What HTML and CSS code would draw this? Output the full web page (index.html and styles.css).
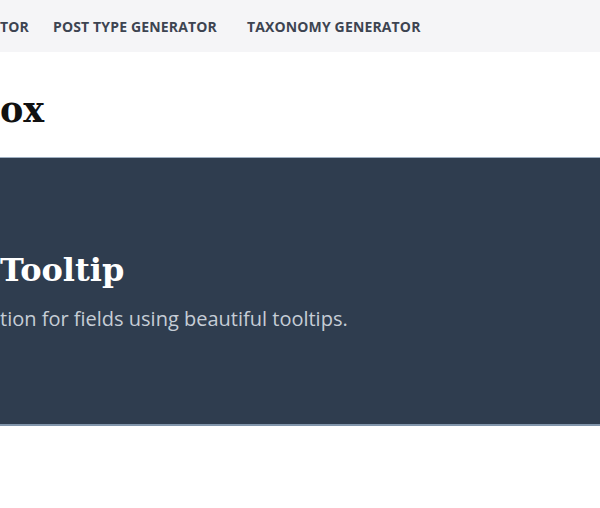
FILE: index.html
```html
<!DOCTYPE html>
<html lang="en">
<head>
<meta charset="utf-8">
<title>Meta Box Tooltip</title>
<link rel="stylesheet" href="styles.css">
</head>
<body>
<header class="nav">
  <a class="nav-link nav-link-first" href="#">TOR</a>
  <a class="nav-link" href="#">POST TYPE GENERATOR</a>
  <a class="nav-link" href="#">TAXONOMY GENERATOR</a>
</header>
<section class="brand">
  <h1 class="brand-title">ox</h1>
</section>
<section class="hero">
  <h2 class="hero-title">Tooltip</h2>
  <p class="hero-sub">tion for fields using beautiful tooltips.</p>
</section>
</body>
</html>
```
FILE: styles.css
```css
html, body {
  margin: 0;
  padding: 0;
  background: #ffffff;
}
body {
  width: 600px;
  overflow: hidden;
  font-family: "Open Sans", "DejaVu Sans", sans-serif;
}
.nav {
  height: 52px;
  background: #f5f5f7;
  display: flex;
  align-items: center;
  gap: 30px;
  padding-top: 1px;
  box-sizing: border-box;
}
.nav-link {
  font-size: 14px;
  font-weight: 700;
  color: #3d4451;
  text-decoration: none;
  white-space: nowrap;
  letter-spacing: 0.15px;
}
.nav-link-first {
  margin-right: -6px;
}
.brand {
  height: 105px;
  padding-top: 36px;
  box-sizing: border-box;
}
.brand-title {
  margin: 0;
  font-family: "DejaVu Serif", serif;
  font-weight: 700;
  font-size: 35px;
  line-height: 44px;
  color: #111111;
}
.hero {
  background: #2f3d4f;
  border-top: 1px solid #9fb0c2;
  border-bottom: 2px solid #8195ab;
  height: 269px;
  box-sizing: border-box;
  padding-top: 90px;
}
.hero-title {
  margin: 0;
  font-family: "DejaVu Serif", serif;
  font-weight: 700;
  font-size: 32px;
  line-height: 44px;
  color: #ffffff;
}
.hero-sub {
  margin: 15px 0 0;
  font-family: "Open Sans", sans-serif;
  font-size: 20px;
  line-height: 24px;
  color: #c6cdd6;
  white-space: nowrap;
}
```
